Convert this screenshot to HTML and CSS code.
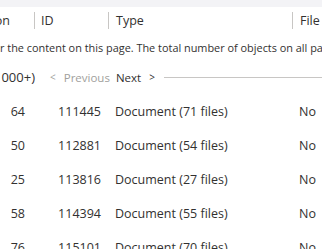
FILE: index.html
```html
<!DOCTYPE html>
<html lang="en">
<head>
    <meta charset="UTF-8">
    <meta name="viewport" content="width=device-width, initial-scale=1.0">
    <title>Objects</title>
    <link rel="stylesheet" href="styles.css">
</head>
<body>
    <div class="topbar"></div>

    <div class="row header">
        <div class="cell c1"><span>Version</span></div>
        <div class="cell c2"><span class="sep"></span>ID</div>
        <div class="cell c3"><span class="sep"></span>Type</div>
        <div class="cell c4"><span class="sep"></span>File size</div>
    </div>

    <p class="info"><span class="lead"><span>Use the filters to filte</span></span><span>r the content on this page. The total number of objects on all pages may be larger.</span></p>

    <div class="pager">
        <span class="count"><span>(1 - 50 of 1000+)</span></span>
        <span class="arrow off">&lt;</span>
        <span class="prev">Previous</span>
        <span class="next">Next</span>
        <span class="arrow">&gt;</span>
        <span class="rule"></span>
    </div>

    <div class="rows">
        <div class="row data">
            <div class="cell c1 num">64</div>
            <div class="cell c2 num">111445</div>
            <div class="cell c3">Document (71 files)</div>
            <div class="cell c4">No</div>
        </div>
        <div class="row data">
            <div class="cell c1 num">50</div>
            <div class="cell c2 num">112881</div>
            <div class="cell c3">Document (54 files)</div>
            <div class="cell c4">No</div>
        </div>
        <div class="row data">
            <div class="cell c1 num">25</div>
            <div class="cell c2 num">113816</div>
            <div class="cell c3">Document (27 files)</div>
            <div class="cell c4">No</div>
        </div>
        <div class="row data">
            <div class="cell c1 num">58</div>
            <div class="cell c2 num">114394</div>
            <div class="cell c3">Document (55 files)</div>
            <div class="cell c4">No</div>
        </div>
        <div class="row data">
            <div class="cell c1 num">76</div>
            <div class="cell c2 num">115101</div>
            <div class="cell c3">Document (70 files)</div>
            <div class="cell c4">No</div>
        </div>
    </div>
</body>
</html>
```

FILE: styles.css
```css
body {
    margin: 0;
    font-family: "Open Sans", sans-serif;
    font-size: 12.5px;
    color: #323130;
    background: #fff;
    overflow: hidden;
}
.topbar {
    height: 7px;
    background-color: #f3f3f6;
}
.row {
    display: grid;
    grid-template-columns: 34px 74px 184px 100px;
    align-items: center;
    white-space: nowrap;
}
.header {
    height: 27px;
}
.header .cell {
    display: flex;
    align-items: center;
    gap: 6px;
}
.header .c1 {
    justify-content: flex-end;
    padding-right: 24px;
}
.header .c3,
.header .c4 {
    gap: 7px;
}
.sep {
    flex: none;
    width: 1px;
    height: 17px;
    background-color: #c8c6c4;
}

/* part of the line is scrolled out on the left */
.lead,
.count {
    display: flex;
    justify-content: flex-end;
}
.lead {
    width: 0;
}
.info {
    display: flex;
    margin: 6px 0 0;
    font-size: 10.9px;
    line-height: 16px;
    white-space: nowrap;
}
.pager {
    display: flex;
    align-items: center;
    height: 16px;
    margin-top: 13px;
    font-size: 11.5px;
    white-space: nowrap;
}
.count {
    width: 35px;
    margin-right: 15px;
    font-size: 13px;
}
.arrow {
    font-size: 10px;
}
.off,
.prev {
    color: #a19f9d;
}
.prev {
    margin-left: 8px;
    margin-right: 6px;
}
.next {
    margin-right: 8px;
}
.rule {
    flex: 1;
    height: 1px;
    background-color: #c8c6c4;
    margin-left: 9px;
}
.rows {
    margin-top: 9px;
}
.data {
    height: 34px;
}
.num {
    text-align: right;
}
.c1.num {
    padding-right: 9px;
}
.c2.num {
    padding-right: 7px;
}
.data .c3,
.data .c4 {
    padding-left: 7px;
}
```
